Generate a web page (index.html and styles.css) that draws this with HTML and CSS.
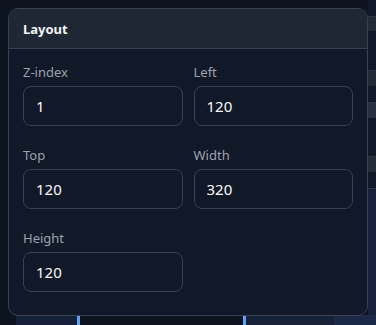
FILE: index.html
```html
<!DOCTYPE html>
<html lang="en">
<head>
  <meta charset="UTF-8">
  <title>Layout</title>
  <link rel="stylesheet" href="styles.css">
</head>
<body>
  <!-- editor canvas behind the popover -->
  <div class="canvas">
    <div class="rail">
      <span class="tile t1"></span>
      <span class="tile t2"></span>
      <span class="tile t3"></span>
      <span class="tile t4"></span>
      <span class="tile t5"></span>
    </div>
    <div class="strip">
      <span class="seg s1"></span>
      <span class="seg s2"></span>
      <span class="seg s3"></span>
      <span class="seg s4"></span>
    </div>
  </div>

  <!-- layout panel -->
  <div class="panel">
    <div class="panel-head">Layout</div>
    <div class="panel-body">
      <label class="field">
        <span class="field-label">Z-index</span>
        <input class="field-input" type="text" value="1">
      </label>
      <label class="field">
        <span class="field-label">Left</span>
        <input class="field-input" type="text" value="120">
      </label>
      <label class="field">
        <span class="field-label">Top</span>
        <input class="field-input" type="text" value="120">
      </label>
      <label class="field">
        <span class="field-label">Width</span>
        <input class="field-input" type="text" value="320">
      </label>
      <label class="field">
        <span class="field-label">Height</span>
        <input class="field-input" type="text" value="120">
      </label>
    </div>
  </div>
</body>
</html>
```

FILE: styles.css
```css
/* page */
html, body {
  margin: 0;
  height: 100%;
}

body {
  position: relative;
  background: #0e1320;
  font-family: 'Noto Sans', 'Open Sans', sans-serif;
  overflow: hidden;
}

/* canvas behind */
.canvas {
  position: absolute;
  inset: 0;
  z-index: 0;
}

.rail {
  position: absolute;
  top: 0;
  right: 0;
  width: 8px;
  height: 100%;
  background: #111827;
}

.tile {
  position: absolute;
  left: 0;
  width: 100%;
  border-top: 1px solid #2b3344;
}

.t1 { top: 16px; height: 14px; background: #222a38; }
.t2 { top: 70px; height: 15px; background: #222a38; }
.t3 { top: 102px; height: 15px; background: #283040; }
.t4 { top: 156px; height: 15px; background: #242c3a; }
.t5 { top: 188px; height: 137px; background: #17213a; }

.strip {
  position: absolute;
  left: 16px;
  right: 0;
  bottom: 0;
  height: 10px;
  display: flex;
}

.seg { height: 100%; }
.s1 { width: 61px; background: #172039; border-right: 3px solid #5ea3f5; }
.s2 { width: 163px; background: #0d131f; border-right: 3px solid #5ea3f5; }
.s3 { width: 88px; background: #172138; }
.s4 { flex: 1; background: #1b2847; }

/* panel */
.panel {
  position: absolute;
  top: 8px;
  left: 8px;
  z-index: 1;
  width: 358px;
  border: 1px solid #374151;
  border-radius: 10px;
  background: #111827;
  overflow: hidden;
}

.panel-head {
  height: 39px;
  padding: 0 14px;
  display: flex;
  align-items: center;
  background: #1f2735;
  border-bottom: 1px solid #374151;
  color: #f3f4f6;
  font-size: 13px;
  font-weight: 700;
}

.panel-body {
  display: grid;
  grid-template-columns: 1fr 1fr;
  column-gap: 11px;
  row-gap: 20px;
  padding: 14px 14px 23px;
}

.field {
  display: flex;
  flex-direction: column;
  gap: 5px;
}

.field-label {
  color: #9ca3af;
  font-size: 13px;
  line-height: 18px;
}

.field-input {
  box-sizing: border-box;
  width: 100%;
  height: 40px;
  padding: 0 12px;
  border: 1px solid #374151;
  border-radius: 8px;
  background: #111827;
  color: #f9fafb;
  font-family: inherit;
  font-size: 15px;
  outline: none;
}
```
